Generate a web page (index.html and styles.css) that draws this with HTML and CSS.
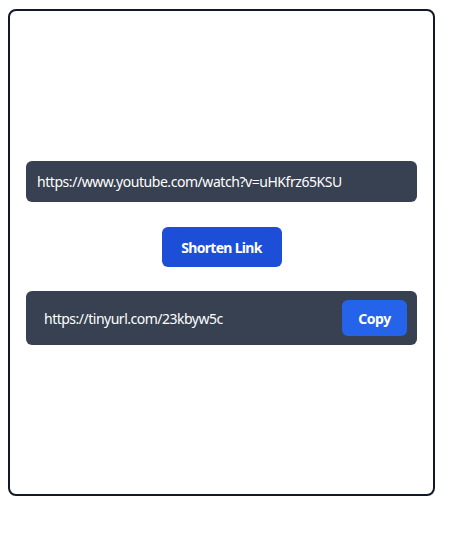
FILE: index.html
```html
<!DOCTYPE html>
<html lang="en">
<head>
<meta charset="utf-8">
<title>Link Shortener</title>
<link rel="stylesheet" href="styles.css">
</head>
<body>
<main class="card">
  <div class="field">https://www.youtube.com/watch?v=uHKfrz65KSU</div>
  <button class="shorten" type="button">Shorten Link</button>
  <div class="result">
    <span class="result-text">https://tinyurl.com/23kbyw5c</span>
    <button class="copy" type="button">Copy</button>
  </div>
</main>
</body>
</html>
```
FILE: styles.css
```css
* { box-sizing: border-box; }
html, body { margin: 0; padding: 0; background: #ffffff; }
body {
  font-family: "Noto Sans", "Open Sans", "Liberation Sans", sans-serif;
  padding: 9px 0 0 8px;
}
.card {
  width: 427px;
  height: 487px;
  border: 2px solid #111827;
  border-radius: 8px;
  padding: 1px 16px 0;
  display: flex;
  flex-direction: column;
  justify-content: center;
  align-items: stretch;
}
.field {
  height: 41px;
  background: #374151;
  border-radius: 6px;
  color: #ffffff;
  font-size: 14px;
  letter-spacing: -0.45px;
  padding: 0 11px;
  display: flex;
  align-items: center;
}
.shorten {
  align-self: center;
  margin-top: 25px;
  width: 120px;
  height: 40px;
  border: none;
  border-radius: 6px;
  background: #1d4ed8;
  color: #ffffff;
  font-family: inherit;
  font-weight: 700;
  font-size: 14px;
  letter-spacing: -0.7px;
}
.result {
  margin-top: 24px;
  height: 54px;
  background: #374151;
  border-radius: 6px;
  padding: 8px 10px 8px 18px;
  display: flex;
  align-items: center;
  justify-content: space-between;
}
.result-text {
  color: #ffffff;
  font-size: 14px;
  letter-spacing: -0.5px;
}
.copy {
  width: 65px;
  height: 36px;
  border: none;
  border-radius: 6px;
  background: #2563eb;
  color: #ffffff;
  font-family: inherit;
  font-weight: 700;
  font-size: 14px;
  letter-spacing: -0.5px;
}
```
